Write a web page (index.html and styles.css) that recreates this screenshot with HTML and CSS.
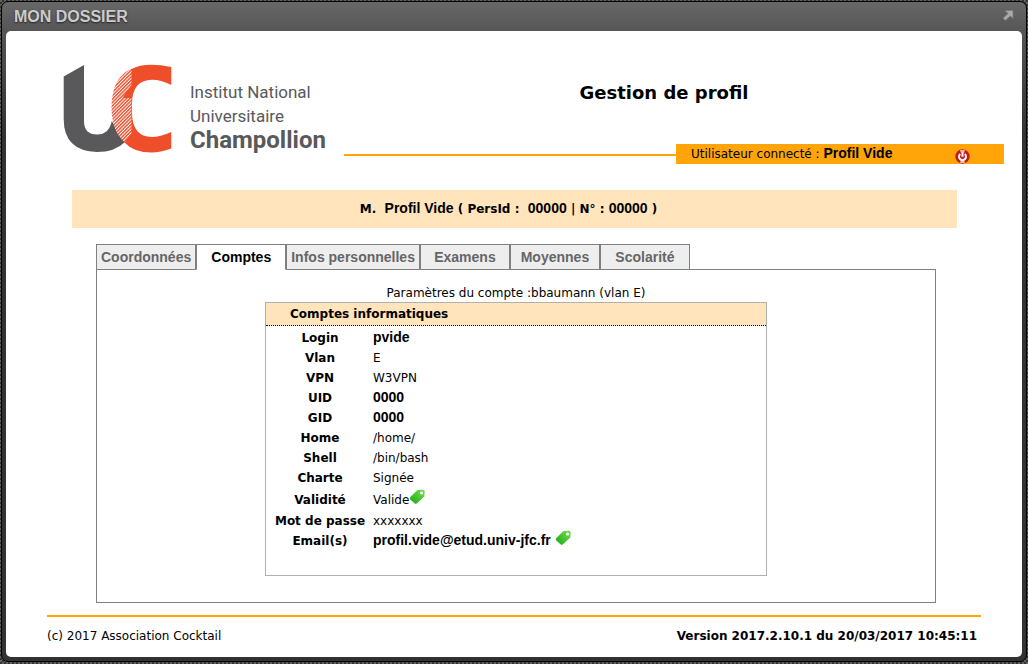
FILE: index.html
```html
<!DOCTYPE html>
<html lang="fr">
<head>
<meta charset="utf-8">
<title>Mon dossier</title>
<meta name="viewport" content="width=device-width, initial-scale=1">
<link rel="stylesheet" href="styles.css">
</head>
<body>
<div class="window">
  <header class="titlebar">
    <h1 class="titlebar-text">MON DOSSIER</h1>
    <button class="icon-button" type="button" aria-label="Ouvrir dans une fenêtre">
      <svg width="12" height="12" viewBox="0 0 12 12"><path d="M3 1.500H11v8L8.400 6.900 3.300 11.500 1 9.200l5-4.700z" fill="#aaa" stroke="#777" stroke-width="0.600"/></svg>
    </button>
  </header>
  <main class="panel">
    <div class="masthead">
      <div class="brand">
        <svg class="brand-mark" width="110" height="90" viewBox="63 64 110 90" aria-hidden="true">
          <defs>
            <pattern id="hatch" width="2.4" height="2.4" patternUnits="userSpaceOnUse" patternTransform="rotate(-45)">
              <rect width="2.4" height="2.4" fill="#fff"/>
              <rect width="2.4" height="1.4" fill="#ef4e2b"/>
            </pattern>
          </defs>
          <path d="M63.7 76.5 84 65V121Q84 134.5 97 134.5 109 134.5 111.8 121L125 142Q115 152 97 152 63.7 151 63.7 119z" fill="#59595b"/>
          <path d="M132 68.5Q111.5 77 111.5 108 112 132 125 142.5L132.5 134 132 124z" fill="url(#hatch)"/>
          <path d="M131.5 69Q145 61.5 171.3 67V85Q161 79.7 152 79.7 132 80 132 104V112Q132 137 152 137 160 137 171.3 132V148.5Q160 152.5 152 152.5 133.5 152.5 124.5 142.5L131.5 133V98H122.5Q127 90 131.5 85z" fill="#ef4e2b"/>
        </svg>
        <div class="brand-name">
          <span>Institut National</span>
          <span>Universitaire</span>
          <strong>Champollion</strong>
        </div>
      </div>
      <div class="masthead-side">
        <h2 class="page-title">Gestion de profil</h2>
        <div class="user-row">
          <div class="user-rule"></div>
          <div class="user-bar">
            <p class="user-text">Utilisateur connecté : <strong class="sans">Profil Vide</strong></p>
            <button class="icon-button" type="button" aria-label="Déconnexion">
              <svg width="15" height="15" viewBox="0 0 15 15"><circle cx="7.5" cy="7.5" r="7.2" fill="#c51a1a"/><path d="M5 0.900h5L9 4H6zM5 14.100h5L9 11H6z" fill="#f3b8b0"/><path d="M5.200 5a3.500 3.500 0 1 0 4.600 0M7.500 3.500v4.300" fill="none" stroke="#fff" stroke-width="2"/></svg>
            </button>
          </div>
        </div>
      </div>
    </div>

    <p class="identity">M. &nbsp;<span class="sans">Profil Vide</span> ( PersId : &nbsp;<span class="sans">00000</span> | N° : <span class="sans">00000</span> )</p>

    <div class="tabbed">
      <nav class="tabs">
        <a class="tab" href="#coordonnees">Coordonnées</a>
        <a class="tab tab-active" href="#comptes" aria-current="page">Comptes</a>
        <a class="tab" href="#infos">Infos personnelles</a>
        <a class="tab" href="#examens">Examens</a>
        <a class="tab" href="#moyennes">Moyennes</a>
        <a class="tab" href="#scolarite">Scolarité</a>
      </nav>
      <section class="tab-content" id="comptes">
        <p class="account-caption">Paramètres du compte :bbaumann (vlan E)</p>
        <div class="account">
          <h3 class="account-title">Comptes informatiques</h3>
          <table class="account-table">
            <tr><th scope="row">Login</th><td><b class="sans">pvide</b></td></tr>
            <tr><th scope="row">Vlan</th><td>E</td></tr>
            <tr><th scope="row">VPN</th><td>W3VPN</td></tr>
            <tr><th scope="row">UID</th><td><b class="sans">0000</b></td></tr>
            <tr><th scope="row">GID</th><td><b class="sans">0000</b></td></tr>
            <tr><th scope="row">Home</th><td>/home/</td></tr>
            <tr><th scope="row">Shell</th><td>/bin/bash</td></tr>
            <tr><th scope="row">Charte</th><td>Signée</td></tr>
            <tr class="row-tall"><th scope="row">Validité</th><td>Valide<svg class="tag" width="16" height="16" viewBox="0 0 16 16"><use href="#tag-shape"/></svg></td></tr>
            <tr><th scope="row">Mot de passe</th><td>xxxxxxx</td></tr>
            <tr><th scope="row">Email(s)</th><td><b class="sans">profil.vide@etud.univ-jfc.fr</b> <svg class="tag" width="16" height="16" viewBox="0 0 16 16"><defs><linearGradient id="tag-green" x1="1" y1="0" x2="0" y2="1"><stop offset="0" stop-color="#7be04a"/><stop offset="1" stop-color="#16a816"/></linearGradient><g id="tag-shape"><path d="M8.500 1 14 0.700Q15.700 0.700 15.700 2.500L15.300 7.500 8 14.300Q6.700 15.300 5.500 14.300L1.300 10.500Q0.300 9.300 1.300 8z" fill="url(#tag-green)"/><circle cx="12.500" cy="4" r="1.600" fill="#fff"/></g></defs><use href="#tag-shape"/></svg></td></tr>
          </table>
        </div>
      </section>
    </div>

    <footer class="footer">
      <span>(c) 2017 Association Cocktail</span>
      <strong class="version">Version 2017.2.10.1 du 20/03/2017 10:45:11</strong>
    </footer>
  </main>
</div>
</body>
</html>
```

FILE: styles.css
```css
* {
  box-sizing: border-box;
}

body {
  margin: 0;
  padding: 1px 1px 2px;
  background: #444 repeating-conic-gradient(#333 0 25%, #606060 0 50%) 0 0 / 4px 4px;
  font: 12px/20px Verdana, "DejaVu Sans", sans-serif;
  color: #000;
}

h1, h2, h3, p {
  margin: 0;
}

.window {
  min-height: calc(100vh - 3px);
  padding: 0 4px 4px;
  border: 1px solid #000;
  border-radius: 7px;
  background: #333 linear-gradient(#686868, #555 30px, #333 130px) no-repeat;
  display: flex;
  flex-direction: column;
}

.titlebar {
  display: flex;
  align-items: center;
  justify-content: space-between;
  height: 29px;
  padding: 0 8px;
}

.titlebar-text {
  font: bold 16px/29px "Liberation Sans", Arial, sans-serif;
  color: #ccc;
  text-shadow: 0 1px 2px #222;
}

.icon-button {
  display: flex;
  padding: 0;
  border: 0;
  background: none;
  cursor: pointer;
}

.titlebar .icon-button {
  margin-bottom: 4px;
}

.panel {
  flex: 1;
  padding: 33px 18px 10px 41px;
  border-radius: 5px;
  background: #fff;
}

.masthead {
  display: flex;
  justify-content: space-between;
}

.brand {
  display: flex;
  flex: none;
  width: 297px;
  padding-left: 16px;
}

.brand-name {
  display: flex;
  flex-direction: column;
  padding: 16px 0 0 17px;
  font: 17px/24px Roboto, sans-serif;
  color: #59595b;
}

.brand-name strong {
  font-size: 24px;
}

.masthead-side {
  flex: 1;
}

.page-title {
  padding: 17px 20px 39px 0;
  font-size: 18px;
  line-height: 24px;
  text-align: center;
}

.user-row {
  display: flex;
}

.user-rule {
  flex: 1;
  height: 12px;
  border-bottom: 2px solid #ffa50a;
}

.user-bar {
  display: flex;
  align-items: center;
  justify-content: space-between;
  flex: none;
  width: 328px;
  padding: 0 34px 0 15px;
  background: #ffa50a;
}

.user-bar .icon-button {
  margin-top: 4px;
}

.sans {
  font-family: "Liberation Sans", Arial, sans-serif;
  font-size: 14px;
  line-height: 1;
}

.identity {
  margin: 26px 47px 0 25px;
  padding: 0 12px 0 0;
  background: #ffe4bc;
  font-weight: bold;
  line-height: 38px;
  text-align: center;
}

.tabbed {
  margin: 16px 68px 0 49px;
}

.tabs {
  display: flex;
  margin-bottom: -1px;
}

.tab {
  min-width: 90px;
  padding: 0 4px;
  border: 1px solid #808080;
  background: #eee;
  font: bold 14px/24px "Liberation Sans", Arial, sans-serif;
  color: #666;
  text-align: center;
  text-decoration: none;
}

.tab-active {
  position: relative;
  z-index: 1;
  border-bottom-color: #fff;
  background: #fff;
  color: #000;
}

.tab-content {
  padding: 15px 24px 26px;
  border: 1px solid #808080;
}

.account-caption {
  line-height: 17px;
  text-align: center;
}

.account {
  max-width: 502px;
  margin: 0 auto;
  padding-bottom: 24px;
  border: 1px solid #b0b0b0;
}

.account-title {
  padding-left: 24px;
  border-bottom: 1px dotted #000;
  background: #ffe4bc;
  font-size: 12px;
  line-height: 22px;
}

.account-table {
  margin: 2px 0 0 8px;
  border-collapse: collapse;
}

.account-table th,
.account-table td {
  height: 20px;
  padding: 0;
  line-height: 18px;
  vertical-align: middle;
}

.account-table th {
  width: 92px;
  text-align: center;
}

.account-table td {
  padding-left: 7px;
}

.account-table .row-tall th,
.account-table .row-tall td {
  height: 23px;
}

.tag {
  margin-top: -4px;
  vertical-align: -1px;
}

.footer {
  display: flex;
  justify-content: space-between;
  margin: 12px 23px 0 0;
  padding: 9px 4px 0 0;
  border-top: 2px solid #ffa50a;
}
```
